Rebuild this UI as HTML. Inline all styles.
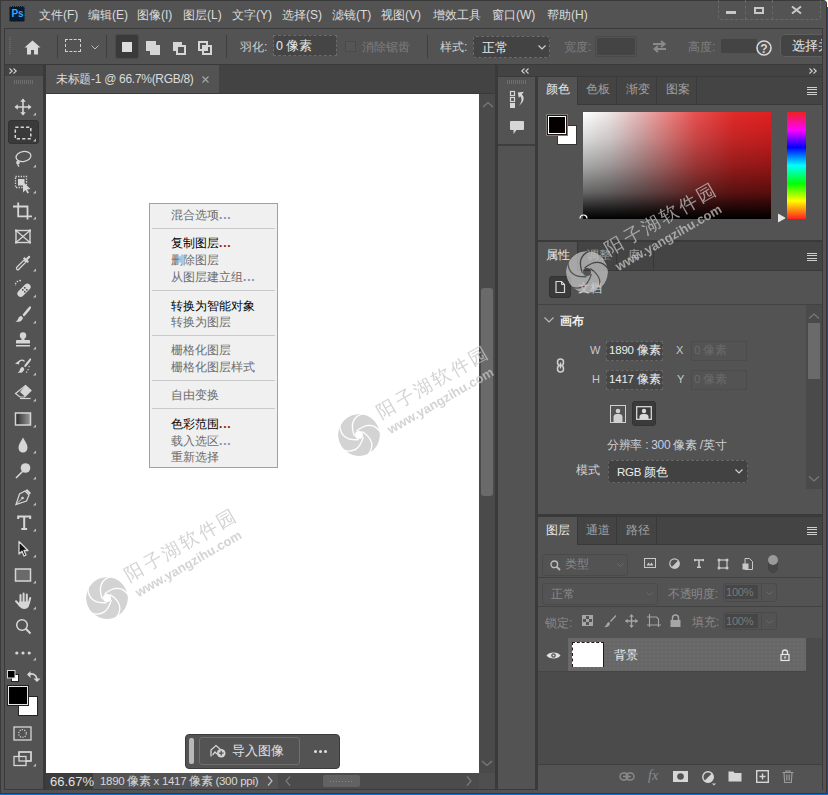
<!DOCTYPE html>
<html><head><meta charset="utf-8">
<style>
*{margin:0;padding:0;box-sizing:border-box}
html,body{width:828px;height:795px;overflow:hidden;background:#fff}
body{position:relative;font-family:"Liberation Sans",sans-serif;font-size:12px;color:#e0e0e0}
.a{position:absolute}
.t{position:absolute;white-space:nowrap;line-height:1}
svg{position:absolute;overflow:visible}
</style></head><body>
<!-- window frame -->
<div class="a" style="left:0;top:0;width:827px;height:794px;background:#535353;border-top-right-radius:4px;border-top:1px solid #3a3a3a;border-right:1px solid #3d3630"></div>
<div class="a" style="left:827px;top:7px;width:1px;height:788px;background:#0050d0"></div>
<div class="a" style="left:0;top:0;width:1px;height:794px;background:#3a3a3a"></div>
<div class="a" style="left:0;top:793px;width:827px;height:1px;background:#3d3630"></div>
<div class="a" style="left:0;top:794px;width:828px;height:1px;background:#0a72d8"></div>
<div class="a" style="left:4px;top:789px;width:819px;height:1px;background:#3a3a3a"></div>
<!-- menu bar -->
<div class="a" style="left:9px;top:6px;width:16px;height:16px;background:#0b1a2b;border-radius:2px;border:1px dotted #2a5a90"></div>
<div class="t" style="left:11.5px;top:9px;font-size:10px;font-weight:bold;color:#31a8ff;letter-spacing:-0.2px">Ps</div>
<div class="t" style="left:39px;top:9px;color:#dcdcdc">文件(F)</div>
<div class="t" style="left:88px;top:9px;color:#dcdcdc">编辑(E)</div>
<div class="t" style="left:137px;top:9px;color:#dcdcdc">图像(I)</div>
<div class="t" style="left:183px;top:9px;color:#dcdcdc">图层(L)</div>
<div class="t" style="left:232px;top:9px;color:#dcdcdc">文字(Y)</div>
<div class="t" style="left:282px;top:9px;color:#dcdcdc">选择(S)</div>
<div class="t" style="left:332px;top:9px;color:#dcdcdc">滤镜(T)</div>
<div class="t" style="left:381px;top:9px;color:#dcdcdc">视图(V)</div>
<div class="t" style="left:433px;top:9px;color:#dcdcdc">增效工具</div>
<div class="t" style="left:492px;top:9px;color:#dcdcdc">窗口(W)</div>
<div class="t" style="left:547px;top:9px;color:#dcdcdc">帮助(H)</div>
<!-- window controls -->
<div class="a" style="left:718px;top:-2px;width:103px;height:22px;border:1px dashed #6a6a6a;border-radius:0 0 4px 4px"></div>
<div class="a" style="left:745px;top:0;width:1px;height:20px;border-left:1px dashed #6a6a6a"></div>
<div class="a" style="left:772px;top:0;width:1px;height:20px;border-left:1px dashed #6a6a6a"></div>
<div class="a" style="left:726px;top:11px;width:10px;height:3px;background:#c8c8c8"></div>
<div class="a" style="left:754px;top:7px;width:10px;height:7px;border:2px solid #c8c8c8"></div>
<svg style="left:791px;top:6px" width="11" height="8" viewBox="0 0 11 8"><path d="M1 0.5L10 7.5M10 0.5L1 7.5" stroke="#c8c8c8" stroke-width="2"/></svg>

<!-- options toolbar -->
<div class="a" style="left:4px;top:28px;width:819px;height:36px;background:#535353;border:1px solid #3a3a3a;border-bottom:none"></div>


<!-- options content -->
<div class="a" style="left:9px;top:37px;width:2px;height:18px;background:repeating-linear-gradient(#666 0 1px,transparent 1px 2px)"></div>
<svg style="left:24px;top:40px" width="17" height="15" viewBox="0 0 17 15"><path d="M8.5 0.5L0.5 7.5H3V14.5H7V10H10V14.5H14V7.5H16.5Z" fill="#d8d8d8"/></svg>
<div class="a" style="left:57px;top:35px;width:1px;height:23px;background:#3e3e3e"></div>
<div class="a" style="left:65px;top:39px;width:16px;height:13px;border:1.5px dashed #d0d0d0"></div>
<svg style="left:91px;top:45px" width="8" height="5" viewBox="0 0 8 5"><path d="M0.5 0.5L4 4L7.5 0.5" stroke="#bdbdbd" fill="none" stroke-width="1"/></svg>
<div class="a" style="left:106px;top:35px;width:1px;height:23px;background:#3e3e3e"></div>
<div class="a" style="left:115px;top:34px;width:24px;height:25px;background:#3a3a3a;border:1px solid #4a4a4a;border-radius:3px"></div>
<div class="a" style="left:122px;top:42px;width:10px;height:10px;background:#dcdcdc"></div>
<div class="a" style="left:146px;top:41px;width:10px;height:10px;background:#d6d6d6"></div>
<div class="a" style="left:150px;top:45px;width:10px;height:10px;background:#d6d6d6"></div>
<div class="a" style="left:173px;top:42px;width:9px;height:9px;background:#d6d6d6"></div>
<div class="a" style="left:176px;top:45px;width:10px;height:10px;border:2px solid #d6d6d6;background:#535353"></div>
<div class="a" style="left:198px;top:41px;width:10px;height:10px;border:2px solid #d6d6d6"></div>
<div class="a" style="left:202px;top:45px;width:10px;height:10px;border:2px solid #d6d6d6"></div><div class="a" style="left:202px;top:45px;width:6px;height:6px;background:#d6d6d6"></div>
<div class="a" style="left:226px;top:35px;width:1px;height:23px;background:#3e3e3e"></div>
<div class="t" style="left:240px;top:41px;color:#d0d0d0">羽化:</div>
<div class="a" style="left:273px;top:35px;width:64px;height:21px;background:#454545;border:1px dashed #6a6a6a"></div>
<div class="t" style="left:276px;top:40px;color:#e8e8e8;font-size:12.5px">0 像素</div>
<div class="a" style="left:345px;top:41px;width:11px;height:11px;border:1px solid #4a4a4a;background:#565656"></div>
<div class="t" style="left:362px;top:41px;color:#7e7e7e">消除锯齿</div>
<div class="a" style="left:427px;top:35px;width:1px;height:23px;background:#3e3e3e"></div>
<div class="t" style="left:440px;top:41px;color:#d0d0d0">样式:</div>
<div class="a" style="left:473px;top:36px;width:77px;height:22px;background:#434343;border:1px dashed #6a6a6a;border-radius:3px"></div>
<div class="t" style="left:482px;top:42px;color:#e8e8e8;font-size:12.5px">正常</div>
<svg style="left:538px;top:45px" width="8" height="5" viewBox="0 0 8 5"><path d="M0.5 0.5L4 4L7.5 0.5" stroke="#d0d0d0" fill="none" stroke-width="1.2"/></svg>
<div class="t" style="left:564px;top:41px;color:#7e7e7e">宽度:</div>
<div class="a" style="left:595px;top:36px;width:42px;height:21px;border:1px solid #4a4a4a;background:#535353"></div>
<div class="a" style="left:597px;top:38px;width:38px;height:17px;background:#444"></div>
<svg style="left:652px;top:40px" width="15" height="13" viewBox="0 0 15 13"><path d="M1 4H12M9 1L12.5 4L9 7M14 9H3M6 6L2.5 9L6 12" stroke="#8a8a8a" fill="none" stroke-width="2"/></svg>
<div class="t" style="left:688px;top:41px;color:#7e7e7e">高度:</div>
<div class="a" style="left:721px;top:39px;width:36px;height:14px;background:#444"></div>
<svg style="left:756px;top:40px" width="16" height="16" viewBox="0 0 16 16"><circle cx="8" cy="8" r="7" stroke="#d8d8d8" stroke-width="1.6" fill="none"/><text x="8" y="12.5" text-anchor="middle" font-size="12" font-weight="bold" fill="#d8d8d8" font-family="Liberation Sans">?</text></svg>
<div class="a" style="left:780px;top:34px;width:42px;height:23px;overflow:hidden"><div class="a" style="left:0;top:0;width:50px;height:23px;background:#444;border:1px solid #5e5e5e;border-radius:4px"></div>
<div class="t" style="left:12px;top:5px;color:#e8e8e8;font-size:13px">选择并</div></div>

<!-- left ">>" strip -->
<div class="a" style="left:4px;top:64px;width:819px;height:1px;background:#3a3a3a"></div>
<div class="a" style="left:5px;top:65px;width:38px;height:11px;background:#434343"></div>
<!-- left tool column -->
<div class="a" style="left:4px;top:64px;width:1px;height:726px;background:#3a3a3a"></div>
<div class="a" style="left:5px;top:76px;width:38px;height:713px;background:#535353"></div>
<div class="a" style="left:43px;top:64px;width:3px;height:726px;background:#3a3a3a"></div>

<!-- tools -->
<div class="a" style="left:14px;top:80px;width:20px;height:4px;background:repeating-linear-gradient(90deg,#6e6e6e 0 1px,transparent 1px 2px)"></div>
<svg style="left:9px;top:68px" width="8" height="6" viewBox="0 0 8 6"><path d="M0.5 0.5L3.2 3L0.5 5.5M4.5 0.5L7.2 3L4.5 5.5" stroke="#d0d0d0" fill="none" stroke-width="1.1"/></svg>
<div class="a" style="left:8px;top:120px;width:31px;height:24px;background:#3a3a3a;border:1px solid #333;border-radius:3px"></div>
<svg style="left:13px;top:96.5px" width="20" height="20" viewBox="0 0 20 20"><path d="M10 2.5V17.5M2.5 10H17.5" stroke="#d6d6d6" stroke-width="1.6"/><path d="M10 1.5L12.8 4.8H7.2ZM10 18.5L12.8 15.2H7.2ZM1.5 10L4.8 7.2V12.8ZM18.5 10L15.2 7.2V12.8Z" fill="#d6d6d6"/><path d="M23 15.5V18.5H20Z" fill="#bdbdbd"/></svg>
<svg style="left:13px;top:122.5px" width="20" height="20" viewBox="0 0 20 20"><rect x="2.3" y="4.3" width="15.5" height="11.5" fill="none" stroke="#d6d6d6" stroke-width="1.5" stroke-dasharray="3.2 2.2"/><path d="M23 15.5V18.5H20Z" fill="#bdbdbd"/></svg>
<svg style="left:13px;top:148.5px" width="20" height="20" viewBox="0 0 20 20"><ellipse cx="10.5" cy="7.5" rx="7.5" ry="5" fill="none" stroke="#d6d6d6" stroke-width="1.3" transform="rotate(-10 10.5 7.5)"/><path d="M5 12C3 13 3.5 15 5.5 14.5C7 14 6 12.5 5 12.5C4 13 4.5 16 6 17.5" fill="none" stroke="#d6d6d6" stroke-width="1.3"/><path d="M23 15.5V18.5H20Z" fill="#bdbdbd"/></svg>
<svg style="left:13px;top:174.5px" width="20" height="20" viewBox="0 0 20 20"><rect x="2.5" y="1.5" width="11" height="11" fill="none" stroke="#d6d6d6" stroke-width="1.3" stroke-dasharray="1.3 1.3"/><rect x="5" y="4" width="6.5" height="6.5" fill="#d6d6d6"/><path d="M10 7L10 17.5L12.5 15L14.5 18.5L16 17.5L14 14.5L17.5 14Z" fill="#d6d6d6"/><path d="M23 15.5V18.5H20Z" fill="#bdbdbd"/></svg>
<svg style="left:13px;top:200.5px" width="20" height="20" viewBox="0 0 20 20"><path d="M0 5.5H5.2M5.2 1.5V15.3H19M5.2 5.5H14.5V18.5" fill="none" stroke="#d6d6d6" stroke-width="1.8"/><path d="M23 15.5V18.5H20Z" fill="#bdbdbd"/></svg>
<svg style="left:13px;top:226.5px" width="20" height="20" viewBox="0 0 20 20"><rect x="3" y="3.5" width="14" height="12" fill="none" stroke="#d6d6d6" stroke-width="1.4"/><path d="M3 3.5L17 15.5M17 3.5L3 15.5" stroke="#d6d6d6" stroke-width="1.3"/><g fill="#d6d6d6"><rect x="2" y="2.5" width="2" height="2"/><rect x="16" y="2.5" width="2" height="2"/><rect x="2" y="14.5" width="2" height="2"/><rect x="16" y="14.5" width="2" height="2"/></g></svg>
<svg style="left:13px;top:252.5px" width="20" height="20" viewBox="0 0 20 20"><path d="M4 16.5C3 15.5 3.5 14.5 4.5 13.5L11 7L13 9L6.5 15.5C5.5 16.5 5 17.5 4 16.5Z" fill="none" stroke="#d6d6d6" stroke-width="1.2"/><path d="M10 5.5L14.5 10L16 8.5L14.5 7L17 4.5C17.8 3.5 16.5 2 15.5 3L13 5.5L11.5 4Z" fill="#d6d6d6"/><path d="M23 15.5V18.5H20Z" fill="#bdbdbd"/></svg>
<svg style="left:13px;top:278.5px" width="20" height="20" viewBox="0 0 20 20"><path d="M8 1.5C4 1.5 2 4 2.5 7" fill="none" stroke="#d6d6d6" stroke-width="1.3" stroke-dasharray="1.6 1.3"/><rect x="3" y="8" width="16" height="6.5" rx="3.25" transform="rotate(-45 11 11.25)" fill="#d6d6d6"/><g fill="#535353"><rect x="9" y="10" width="1.6" height="1.6"/><rect x="11" y="8" width="1.6" height="1.6"/><rect x="11" y="12" width="1.6" height="1.6"/><rect x="13" y="10" width="1.6" height="1.6"/></g><path d="M23 15.5V18.5H20Z" fill="#bdbdbd"/></svg>
<svg style="left:13px;top:304.5px" width="20" height="20" viewBox="0 0 20 20"><path d="M16.5 1.5C15 3 11.5 7 9.5 10L11 11.5C13.5 9 17 5 18 3C18.3 2 17.5 1 16.5 1.5Z" fill="#d6d6d6"/><path d="M8.5 11C6.5 11 5.5 12.5 5 14C4.6 15 4 16 2.5 16.5C5.5 17.5 9 16.5 10 13Z" fill="#d6d6d6"/><path d="M23 15.5V18.5H20Z" fill="#bdbdbd"/></svg>
<svg style="left:13px;top:330.5px" width="20" height="20" viewBox="0 0 20 20"><circle cx="10" cy="4.5" r="3.2" fill="#d6d6d6"/><path d="M8.5 6.5H11.5V9H16C16.5 9 17 9.5 17 10V12.5H3V10C3 9.5 3.5 9 4 9H8.5Z" fill="#d6d6d6"/><rect x="3" y="14" width="14" height="1.5" fill="#d6d6d6"/><path d="M23 15.5V18.5H20Z" fill="#bdbdbd"/></svg>
<svg style="left:13px;top:356.5px" width="20" height="20" viewBox="0 0 20 20"><path d="M17 1.5C15.5 3 12.5 6.5 11 9L12.2 10.2C14 8.5 17 5 18 3C18.3 2 17.8 1 17 1.5Z" fill="#d6d6d6"/><path d="M10 10C8 10 7 11.5 6.8 13C6.5 14 6 15 4.5 15.5C7.5 16.5 10.5 15.5 11.3 12Z" fill="#d6d6d6"/><path d="M5.5 5C7.5 3 10 3 11.5 4.5" fill="none" stroke="#d6d6d6" stroke-width="1.2"/><path d="M2 6.5L6.5 3.5L6 7.5Z" fill="#d6d6d6"/><g fill="#d6d6d6"><rect x="15.5" y="9" width="1.2" height="1.2"/><rect x="14.5" y="12" width="1.2" height="1.2"/><rect x="13" y="14.5" width="1.2" height="1.2"/></g><path d="M23 15.5V18.5H20Z" fill="#bdbdbd"/></svg>
<svg style="left:13px;top:382.5px" width="20" height="20" viewBox="0 0 20 20"><path d="M12.5 2.5L18 7.5L11.5 14H7L2.5 10.5Z" fill="none" stroke="#d6d6d6" stroke-width="1.2"/><path d="M12.5 2.5L18 7.5L12 13.5L7 9Z" fill="#d6d6d6"/><path d="M7 15.5H17.5" stroke="#d6d6d6" stroke-width="1.2"/><path d="M23 15.5V18.5H20Z" fill="#bdbdbd"/></svg>
<svg style="left:13px;top:408.5px" width="20" height="20" viewBox="0 0 20 20"><defs><linearGradient id="gr" x1="0" x2="1"><stop offset="0" stop-color="#2a2a2a"/><stop offset="1" stop-color="#9a9a9a"/></linearGradient></defs><rect x="2.5" y="4" width="15" height="12" fill="url(#gr)" stroke="#d6d6d6" stroke-width="1.5"/><path d="M23 15.5V18.5H20Z" fill="#bdbdbd"/></svg>
<svg style="left:13px;top:434.5px" width="20" height="20" viewBox="0 0 20 20"><path d="M10 2.5C8 6.5 5.5 9 5.5 12.5C5.5 15.5 7.5 17.5 10 17.5C12.5 17.5 14.5 15.5 14.5 12.5C14.5 9 12 6.5 10 2.5Z" fill="#d6d6d6"/><path d="M23 15.5V18.5H20Z" fill="#bdbdbd"/></svg>
<svg style="left:13px;top:460.5px" width="20" height="20" viewBox="0 0 20 20"><circle cx="12.5" cy="7" r="4.8" fill="#d6d6d6"/><path d="M9.5 10.5L3 17" stroke="#d6d6d6" stroke-width="1.6"/><path d="M23 15.5V18.5H20Z" fill="#bdbdbd"/></svg>
<svg style="left:13px;top:486.5px" width="20" height="20" viewBox="0 0 20 20"><path d="M14 2L18 6L16.5 7.5L12.5 3.5Z" fill="#d6d6d6"/><path d="M12 4L16 8L13.5 14L3 17.5L6.5 7Z" fill="none" stroke="#d6d6d6" stroke-width="1.2"/><path d="M3 17.5L9 11.5" stroke="#d6d6d6" stroke-width="1"/><circle cx="9.5" cy="11" r="1.3" fill="#d6d6d6"/><path d="M23 15.5V18.5H20Z" fill="#bdbdbd"/></svg>
<svg style="left:13px;top:512.5px" width="20" height="20" viewBox="0 0 20 20"><path d="M5.2 2.5V6M17.2 2.5V6M5.2 3.5H17.2M11.2 3.5V16M8.3 16H14.1" fill="none" stroke="#d6d6d6" stroke-width="2"/><path d="M23 15.5V18.5H20Z" fill="#bdbdbd"/></svg>
<svg style="left:13px;top:538.5px" width="20" height="20" viewBox="0 0 20 20"><path d="M6 2.5V15L9 12.3L11 17L13 16L11 11.5H15Z" fill="#111" stroke="#d6d6d6" stroke-width="1.3" stroke-linejoin="round"/><path d="M23 15.5V18.5H20Z" fill="#bdbdbd"/></svg>
<svg style="left:13px;top:564.5px" width="20" height="20" viewBox="0 0 20 20"><rect x="2.5" y="4" width="15" height="12" fill="#6a6a6a" stroke="#d6d6d6" stroke-width="1.5"/><path d="M23 15.5V18.5H20Z" fill="#bdbdbd"/></svg>
<svg style="left:13px;top:590.5px" width="20" height="20" viewBox="0 0 20 20"><path d="M7.5 4V11M10.6 2.6V11M13.8 3.5V11M17.2 7L15.8 12.5M3 10.2L6.8 14.5" stroke="#d6d6d6" stroke-width="2" stroke-linecap="round"/><path d="M6.3 10.5H16.6L16 15C15.2 17 13.4 17.9 11.2 17.9C9 17.9 7.6 17 6.6 15.4L5.3 13Z" fill="#d6d6d6"/><path d="M23 15.5V18.5H20Z" fill="#bdbdbd"/></svg>
<svg style="left:13px;top:616.5px" width="20" height="20" viewBox="0 0 20 20"><circle cx="9" cy="8" r="5.3" fill="none" stroke="#d6d6d6" stroke-width="1.5"/><path d="M12.8 11.8L17.5 16.5" stroke="#d6d6d6" stroke-width="2"/></svg>
<svg style="left:13px;top:642.5px" width="20" height="20" viewBox="0 0 20 20"><circle cx="3.8" cy="10" r="1.6" fill="#d6d6d6"/><circle cx="10" cy="10" r="1.6" fill="#d6d6d6"/><circle cx="16.2" cy="10" r="1.6" fill="#d6d6d6"/><path d="M23 14.5V17.5H20Z" fill="#bdbdbd"/></svg>
<div class="a" style="left:18px;top:696px;width:20px;height:20px;background:#fff;border:1px solid #222"></div>
<div class="a" style="left:8px;top:686px;width:20px;height:19px;background:#000;border:1.5px solid #e8e8e8;outline:1px solid #222"></div>
<svg style="left:7px;top:670px" width="12" height="12" viewBox="0 0 12 12"><rect x="4.5" y="4.5" width="7" height="7" fill="#fff" stroke="#222"/><rect x="0.5" y="0.5" width="7.5" height="7.5" fill="#000" stroke="#d6d6d6"/></svg>
<svg style="left:27px;top:670px" width="12" height="12" viewBox="0 0 12 12"><path d="M1.5 4.5C5 3 9 4 10 9" fill="none" stroke="#d6d6d6" stroke-width="1.6"/><path d="M0 4.5L3.5 1V8ZM10 12L6.5 8.5H13.5Z" fill="#d6d6d6"/></svg>
<svg style="left:13px;top:726px" width="19" height="15" viewBox="0 0 19 15"><rect x="1" y="1" width="17" height="13" fill="none" stroke="#d6d6d6" stroke-width="1.3"/><circle cx="9.5" cy="7.5" r="3.8" fill="none" stroke="#d6d6d6" stroke-width="1.2" stroke-dasharray="1.2 1.2"/></svg>
<svg style="left:13px;top:751px" width="24" height="18" viewBox="0 0 24 18"><rect x="6" y="1" width="12" height="9" fill="#535353" stroke="#d6d6d6" stroke-width="1.3"/><rect x="1" y="5.5" width="12" height="9" fill="#535353" stroke="#d6d6d6" stroke-width="1.3"/><rect x="6" y="1" width="12" height="9" fill="none" stroke="#d6d6d6" stroke-width="1.3"/><path d="M23 12.5V15.5H20Z" fill="#bdbdbd"/></svg>

<!-- doc tab bar -->
<div class="a" style="left:46px;top:65px;width:449px;height:29px;background:#434343"></div>
<div class="a" style="left:46px;top:65px;width:173px;height:28px;background:#535353"></div>
<div class="a" style="left:46px;top:93px;width:449px;height:1px;background:#3a3a3a"></div>
<!-- canvas -->
<div class="a" style="left:46px;top:94px;width:433px;height:679px;background:#fff"></div>

<!-- doc tab text -->
<div class="t" style="left:56px;top:73px;color:#dcdcdc;font-size:12px;letter-spacing:-0.3px">未标题-1 @ 66.7%(RGB/8)</div>
<svg style="left:202px;top:76px" width="7" height="7" viewBox="0 0 7 7"><path d="M0.5 0.5L6.5 6.5M6.5 0.5L0.5 6.5" stroke="#a8a8a8" stroke-width="1.1"/></svg>


<!-- float bar -->
<div class="a" style="left:185px;top:734px;width:155px;height:35px;background:#535353;border:1px solid #3c3c3c;border-radius:4px"></div>
<div class="a" style="left:189px;top:738px;width:5px;height:26px;background:#b8b8b8;border-radius:2px"></div>
<div class="a" style="left:199px;top:737px;width:101px;height:28px;border:1px solid #6e6e6e;border-radius:3px"></div>
<svg style="left:210px;top:744px" width="16" height="14" viewBox="0 0 16 14"><path d="M1 12.5V6L6 1.5L11 6" fill="none" stroke="#d6d6d6" stroke-width="1.3"/><path d="M2.5 11L5 8L7 10" fill="none" stroke="#d6d6d6" stroke-width="1.2"/><circle cx="11.2" cy="9.2" r="4.3" fill="#d6d6d6"/><path d="M11.2 6.8V11.6M8.8 9.2H13.6" stroke="#535353" stroke-width="1.3"/></svg>
<div class="t" style="left:232px;top:745px;color:#e0e0e0;font-size:12.5px">导入图像</div>
<div class="a" style="left:314px;top:750px;width:3px;height:3px;background:#e0e0e0;border-radius:50%"></div>
<div class="a" style="left:319px;top:750px;width:3px;height:3px;background:#e0e0e0;border-radius:50%"></div>
<div class="a" style="left:324px;top:750px;width:3px;height:3px;background:#e0e0e0;border-radius:50%"></div>
<!-- context menu -->
<div class="a" style="left:149px;top:203px;width:129px;height:265px;background:#f0f0f0;border:1px solid #a0a0a0"></div>
<div class="t" style="left:171px;top:209px;color:#6d6d6d;font-size:12px">混合选项<span style="color:#7a8fb8;font-weight:bold;letter-spacing:0.8px">...</span></div>
<div class="a" style="left:152px;top:228px;width:123px;height:1px;background:#c8c8c8"></div>
<div class="t" style="left:171px;top:237px;color:#000;font-size:12px">复制图层<span style="color:#8b1a1a;font-weight:bold;letter-spacing:0.8px">...</span></div>
<div class="t" style="left:171px;top:254px;color:#6d6d6d;font-size:12px">删除图层</div>
<div class="t" style="left:171px;top:271px;color:#6d6d6d;font-size:12px">从图层建立组<span style="color:#7a8fb8;font-weight:bold;letter-spacing:0.8px">...</span></div>
<div class="a" style="left:152px;top:290px;width:123px;height:1px;background:#c8c8c8"></div>
<div class="t" style="left:171px;top:300px;color:#000;font-size:12px">转换为智能对象</div>
<div class="t" style="left:171px;top:316px;color:#6d6d6d;font-size:12px">转换为图层</div>
<div class="a" style="left:152px;top:335px;width:123px;height:1px;background:#c8c8c8"></div>
<div class="t" style="left:171px;top:344px;color:#6d6d6d;font-size:12px">栅格化图层</div>
<div class="t" style="left:171px;top:361px;color:#6d6d6d;font-size:12px">栅格化图层样式</div>
<div class="a" style="left:152px;top:380px;width:123px;height:1px;background:#c8c8c8"></div>
<div class="t" style="left:171px;top:389px;color:#6d6d6d;font-size:12px">自由变换</div>
<div class="a" style="left:152px;top:408px;width:123px;height:1px;background:#c8c8c8"></div>
<div class="t" style="left:171px;top:418px;color:#000;font-size:12px">色彩范围<span style="color:#8b1a1a;font-weight:bold;letter-spacing:0.8px">...</span></div>
<div class="t" style="left:171px;top:435px;color:#6d6d6d;font-size:12px">载入选区<span style="color:#7a8fb8;font-weight:bold;letter-spacing:0.8px">...</span></div>
<div class="t" style="left:171px;top:451px;color:#6d6d6d;font-size:12px">重新选择</div>
<!-- v scrollbar -->
<div class="a" style="left:479px;top:94px;width:16px;height:679px;background:#4a4a4a"></div>
<div class="a" style="left:481px;top:288px;width:12px;height:208px;background:#6a6a6a;border-radius:3px"></div>
<!-- status bar -->
<div class="a" style="left:46px;top:773px;width:449px;height:16px;background:#535353"></div>
<div class="a" style="left:46px;top:773px;width:47px;height:16px;background:#3d3d3d"></div>
<div class="a" style="left:278px;top:773px;width:201px;height:16px;background:#4b4b4b"></div>
<div class="a" style="left:479px;top:773px;width:16px;height:16px;background:#4f4f4f"></div>
<div class="a" style="left:323px;top:775px;width:37px;height:12px;background:#626262;border-radius:2px"></div>

<svg style="left:482px;top:101px" width="12" height="7" viewBox="0 0 12 7"><path d="M1 6L6 1.5L11 6" stroke="#7a7a7a" fill="none" stroke-width="1.3"/></svg>
<svg style="left:481px;top:760px" width="12" height="7" viewBox="0 0 12 7"><path d="M1 1L6 5.5L11 1" stroke="#7a7a7a" fill="none" stroke-width="1.3"/></svg>
<!-- status -->
<div class="t" style="left:50px;top:775px;color:#e0e0e0;font-size:13px">66.67%</div>
<div class="t" style="left:100px;top:776px;color:#d8d8d8;font-size:11.5px;letter-spacing:-0.3px">1890 像素 x 1417 像素 (300 ppi)</div>
<svg style="left:267px;top:776px" width="6" height="10" viewBox="0 0 6 10"><path d="M1 0.5L5 5L1 9.5" stroke="#bdbdbd" fill="none" stroke-width="1.2"/></svg>
<svg style="left:285px;top:776px" width="6" height="10" viewBox="0 0 6 10"><path d="M5 0.5L1 5L5 9.5" stroke="#7a7a7a" fill="none" stroke-width="1.2"/></svg>
<svg style="left:466px;top:776px" width="6" height="10" viewBox="0 0 6 10"><path d="M1 0.5L5 5L1 9.5" stroke="#7a7a7a" fill="none" stroke-width="1.2"/></svg>
<div class="a" style="left:330px;top:781px;width:23px;height:1px;background:repeating-linear-gradient(90deg,#8a8a8a 0 1px,transparent 1px 3px)"></div>
<div class="a" style="left:495px;top:64px;width:3px;height:726px;background:#3a3a3a"></div>

<!-- panel column narrow -->
<div class="a" style="left:498px;top:65px;width:324px;height:11px;background:#434343"></div>
<div class="a" style="left:498px;top:76px;width:324px;height:1px;background:#3a3a3a"></div>
<div class="a" style="left:498px;top:77px;width:37px;height:712px;background:#535353"></div>
<div class="a" style="left:498px;top:144px;width:37px;height:2px;background:#3e3e3e"></div>
<div class="a" style="left:535px;top:76px;width:3px;height:714px;background:#3a3a3a"></div>
<div class="a" style="left:822px;top:64px;width:1px;height:726px;background:#3a3a3a"></div>

<!-- color panel -->
<div class="a" style="left:538px;top:77px;width:284px;height:163px;background:#535353"></div>
<div class="a" style="left:577px;top:77px;width:245px;height:28px;background:#444444;border-bottom:1px solid #3a3a3a"></div>
<div class="a" style="left:538px;top:240px;width:284px;height:2px;background:#3a3a3a"></div>

<!-- narrow panel content -->
<svg style="left:521px;top:68px" width="8" height="6" viewBox="0 0 8 6"><path d="M3.5 0.5L0.8 3L3.5 5.5M7.5 0.5L4.8 3L7.5 5.5" stroke="#d0d0d0" fill="none" stroke-width="1.1"/></svg>
<svg style="left:809px;top:68px" width="8" height="6" viewBox="0 0 8 6"><path d="M0.5 0.5L3.2 3L0.5 5.5M4.5 0.5L7.2 3L4.5 5.5" stroke="#d0d0d0" fill="none" stroke-width="1.1"/></svg>
<div class="a" style="left:507px;top:80px;width:20px;height:4px;background:repeating-linear-gradient(90deg,#6e6e6e 0 1px,transparent 1px 2px)"></div>
<svg style="left:509px;top:90px" width="17" height="19" viewBox="0 0 17 19"><rect x="1.5" y="1.5" width="4" height="4" fill="none" stroke="#d6d6d6" stroke-width="1.2"/><rect x="1.5" y="7.5" width="4" height="4" fill="none" stroke="#d6d6d6" stroke-width="1.2"/><rect x="1" y="13" width="5" height="5" fill="#d6d6d6"/><path d="M8.8 2.6L14.8 1.8L12.8 4.6C15.8 7 15.5 12 9.8 16C13 12 13.2 8.5 11.3 6.3L9.8 8Z" fill="#d6d6d6"/></svg>
<svg style="left:509px;top:120px" width="16" height="15" viewBox="0 0 16 15"><path d="M2 1H14Q15 1 15 2V9Q15 10 14 10H7.5L4.5 14V10H2Q1 10 1 9V2Q1 1 2 1Z" fill="#d6d6d6"/></svg>

<!-- color panel content -->
<div class="t" style="left:546px;top:84px;color:#e8e8e8;font-size:11.5px">颜色</div>
<div class="t" style="left:586px;top:84px;color:#a0a0a0;font-size:11.5px">色板</div>
<div class="t" style="left:626px;top:84px;color:#a0a0a0;font-size:11.5px">渐变</div>
<div class="t" style="left:666px;top:84px;color:#a0a0a0;font-size:11.5px">图案</div>
<div class="a" style="left:616px;top:77px;width:1px;height:28px;background:#3a3a3a"></div>
<div class="a" style="left:656px;top:77px;width:1px;height:28px;background:#3a3a3a"></div>
<div class="a" style="left:696px;top:77px;width:1px;height:28px;background:#3a3a3a"></div>
<div class="a" style="left:577px;top:77px;width:1px;height:28px;background:#3a3a3a"></div>
<div class="a" style="left:807px;top:87px;width:10px;height:8px;background:repeating-linear-gradient(#cfcfcf 0 1px,transparent 1px 2.4px)"></div>
<div class="a" style="left:557px;top:125px;width:20px;height:20px;background:#fff;border:1px solid #333"></div>
<div class="a" style="left:546px;top:114px;width:22px;height:22px;background:#050000;border:1px solid #7c7c7c;box-shadow:inset 0 0 0 1px #2a1414,inset 0 0 0 2px #fff"></div>
<div class="a" style="left:583px;top:112px;width:188px;height:107px;background:linear-gradient(to bottom,rgba(0,0,0,0) 0%,rgba(0,0,0,.14) 25%,rgba(0,0,0,.34) 50%,rgba(0,0,0,.6) 75%,rgba(0,0,0,.86) 90%,#000 100%),linear-gradient(to right,#fff 0%,#eee6e6 14%,#e4b4b4 30%,#ea8282 45%,#e85050 60%,#e22a2a 80%,#e02020 100%)"></div>
<svg style="left:579px;top:211px" width="9" height="9" viewBox="0 0 9 9"><path d="M1 7.5A3.5 3.5 0 0 1 8 7.5" fill="none" stroke="#fff" stroke-width="1.2"/></svg>
<div class="a" style="left:787px;top:112px;width:19px;height:107px;background:linear-gradient(#f02020 0%,#ff00ff 17%,#0000ff 33%,#00ffff 50%,#00ff00 67%,#ffff00 83%,#ff2020 100%)"></div>
<svg style="left:777px;top:213px" width="9" height="10" viewBox="0 0 9 10"><path d="M1 1.5Q1 0.5 2 1L8 4.5Q8.7 5 8 5.5L2 9Q1 9.5 1 8.5Z" fill="#e6e6e6"/></svg>

<!-- properties panel -->
<div class="a" style="left:538px;top:242px;width:284px;height:272px;background:#535353"></div>
<div class="a" style="left:577px;top:242px;width:245px;height:29px;background:#444444;border-bottom:1px solid #3a3a3a"></div>
<div class="a" style="left:538px;top:304px;width:284px;height:1px;background:#424242"></div>
<div class="a" style="left:538px;top:514px;width:284px;height:3px;background:#3a3a3a"></div>

<!-- properties content -->
<div class="a" style="left:577px;top:242px;width:1px;height:28px;background:#383838"></div>
<div class="a" style="left:616px;top:242px;width:1px;height:28px;background:#383838"></div>
<div class="a" style="left:653px;top:242px;width:1px;height:28px;background:#383838"></div>
<div class="t" style="left:546px;top:250px;color:#e8e8e8;font-size:11.5px">属性</div>
<div class="t" style="left:587px;top:250px;color:#a0a0a0;font-size:11.5px">调整</div>
<div class="t" style="left:628px;top:250px;color:#a0a0a0;font-size:11.5px">库</div>
<div class="a" style="left:807px;top:253px;width:10px;height:8px;background:repeating-linear-gradient(#cfcfcf 0 1px,transparent 1px 2.4px)"></div>
<div class="a" style="left:549px;top:276px;width:22px;height:22px;background:#3a3a3a;border:1px solid #333;border-radius:3px"></div>
<svg style="left:553px;top:280px" width="14" height="14" viewBox="0 0 14 14"><path d="M3 1.5H8.5L11.5 4.5V12.5H3Z" fill="none" stroke="#d8d8d8" stroke-width="1.2"/><path d="M8.5 1.5V4.5H11.5" fill="none" stroke="#d8d8d8" stroke-width="1"/></svg>
<div class="t" style="left:578px;top:283px;color:#d8d8d8;font-size:11.5px">文档</div>
<svg style="left:544px;top:317px" width="10" height="6" viewBox="0 0 10 6"><path d="M0.5 0.5L5 5L9.5 0.5" stroke="#bdbdbd" fill="none" stroke-width="1.1"/></svg>
<div class="t" style="left:560px;top:316px;color:#f0f0f0;font-size:11.5px;font-weight:bold">画布</div>
<div class="t" style="left:590px;top:345px;color:#c8c8d8;font-size:11px">W</div>
<div class="a" style="left:606px;top:341px;width:57px;height:20px;background:#474747;border:1px dashed #666"></div>
<div class="t" style="left:609px;top:345px;color:#ececec;font-size:11.5px;letter-spacing:-0.2px">1890 像素</div>
<div class="t" style="left:676px;top:345px;color:#c8c8c8;font-size:11px">X</div>
<div class="a" style="left:691px;top:341px;width:56px;height:20px;border:1px solid #4c4c4c;background:#535353"></div>
<div class="t" style="left:694px;top:345px;color:#6a6a6a;font-size:11.5px;letter-spacing:-0.2px">0 像素</div>
<div class="t" style="left:592px;top:374px;color:#c8c8d8;font-size:11px">H</div>
<div class="a" style="left:606px;top:370px;width:57px;height:20px;background:#474747;border:1px dashed #666"></div>
<div class="t" style="left:609px;top:374px;color:#ececec;font-size:11.5px;letter-spacing:-0.2px">1417 像素</div>
<div class="t" style="left:677px;top:374px;color:#c8c8c8;font-size:11px">Y</div>
<div class="a" style="left:691px;top:370px;width:56px;height:20px;border:1px solid #4c4c4c;background:#535353"></div>
<div class="t" style="left:694px;top:374px;color:#6a6a6a;font-size:11.5px;letter-spacing:-0.2px">0 像素</div>
<svg style="left:556px;top:358px" width="10" height="15" viewBox="0 0 10 15"><rect x="1.5" y="1" width="6" height="6.5" rx="3" fill="none" stroke="#d0d0d0" stroke-width="1.5"/><rect x="1.5" y="7.5" width="6" height="6.5" rx="3" fill="none" stroke="#d0d0d0" stroke-width="1.5"/><path d="M4.5 4.5V10.5" stroke="#d0d0d0" stroke-width="1.3"/></svg>
<svg style="left:610px;top:405px" width="16" height="18" viewBox="0 0 16 18"><rect x="0.5" y="0.5" width="15" height="17" fill="none" stroke="#d0d0d0" stroke-width="1"/><circle cx="8" cy="6" r="2.3" fill="#d0d0d0"/><path d="M3.5 17V12C3.5 10 5 9 6.5 9H9.5C11 9 12.5 10 12.5 12V17Z" fill="#d0d0d0"/></svg>
<div class="a" style="left:632px;top:401px;width:24px;height:25px;background:#3a3a3a;border:1px solid #333;border-radius:3px"></div>
<svg style="left:636px;top:406px" width="16" height="14" viewBox="0 0 16 14"><rect x="0.7" y="0.7" width="14.6" height="12.6" fill="none" stroke="#d8d8d8" stroke-width="1.3"/><circle cx="8" cy="5" r="2.2" fill="#d8d8d8"/><path d="M3.5 13V10.5C3.5 9 5 8 6.5 8H9.5C11 8 12.5 9 12.5 10.5V13Z" fill="#d8d8d8"/></svg>
<div class="t" style="left:607px;top:439px;color:#d0d0d0;font-size:12px;letter-spacing:-0.3px">分辨率 : <span style="color:#c8cce0">300</span> 像素 /英寸</div>
<div class="t" style="left:576px;top:464px;color:#d0d0d0;font-size:12px">模式</div>
<div class="a" style="left:608px;top:460px;width:140px;height:23px;background:#424242;border:1px dashed #666;border-radius:3px"></div>
<div class="t" style="left:617px;top:467px;color:#ececec;font-size:11.5px;letter-spacing:-0.3px">RGB 颜色</div>
<svg style="left:735px;top:469px" width="8" height="5" viewBox="0 0 8 5"><path d="M0.5 0.5L4 4L7.5 0.5" stroke="#d0d0d0" fill="none" stroke-width="1.2"/></svg>
<div class="a" style="left:806px;top:305px;width:16px;height:184px;background:#4a4a4a"></div>
<div class="a" style="left:808px;top:323px;width:12px;height:56px;background:#6a6a6a"></div>
<svg style="left:808px;top:313px" width="12" height="6" viewBox="0 0 12 6"><path d="M1 5.5L6 1L11 5.5" stroke="#7a7a7a" fill="none" stroke-width="1.2"/></svg>
<svg style="left:808px;top:476px" width="12" height="6" viewBox="0 0 12 6"><path d="M1 0.5L6 5L11 0.5" stroke="#7a7a7a" fill="none" stroke-width="1.2"/></svg>

<!-- layers panel -->
<div class="a" style="left:538px;top:517px;width:284px;height:273px;background:#535353"></div>
<div class="a" style="left:577px;top:517px;width:245px;height:28px;background:#444444;border-bottom:1px solid #3a3a3a"></div>

<!-- layers content -->
<div class="a" style="left:577px;top:517px;width:1px;height:27px;background:#383838"></div>
<div class="a" style="left:616px;top:517px;width:1px;height:27px;background:#383838"></div>
<div class="a" style="left:656px;top:517px;width:1px;height:27px;background:#383838"></div>
<div class="t" style="left:546px;top:525px;color:#e8e8e8;font-size:11.5px">图层</div>
<div class="t" style="left:586px;top:525px;color:#a0a0a0;font-size:11.5px">通道</div>
<div class="t" style="left:626px;top:525px;color:#a0a0a0;font-size:11.5px">路径</div>
<div class="a" style="left:807px;top:527px;width:10px;height:8px;background:repeating-linear-gradient(#cfcfcf 0 1px,transparent 1px 2.4px)"></div>
<div class="a" style="left:542px;top:554px;width:86px;height:22px;border:1px solid #4a4a4a;border-radius:3px"></div>
<svg style="left:550px;top:560px" width="11" height="11" viewBox="0 0 11 11"><circle cx="4.3" cy="4.3" r="3.3" fill="none" stroke="#bdbdbd" stroke-width="1.4"/><path d="M6.8 6.8L10 10" stroke="#bdbdbd" stroke-width="1.8"/></svg>
<div class="t" style="left:565px;top:559px;color:#8a8a8a;font-size:11.5px">类型</div>
<svg style="left:617px;top:563px" width="7" height="4" viewBox="0 0 7 4"><path d="M0.5 0.5L3.5 3.5L6.5 0.5" stroke="#6a6a6a" fill="none" stroke-width="1"/></svg>
<svg style="left:644px;top:558px" width="12" height="10" viewBox="0 0 12 10"><rect x="0.5" y="0.5" width="11" height="9" fill="none" stroke="#c8c8c8" stroke-width="1"/><path d="M2.5 7.5L4.5 4.5L6 6.5L7.5 4.5L9.5 7.5Z" fill="#c8c8c8"/></svg>
<svg style="left:669px;top:558px" width="11" height="11" viewBox="0 0 11 11"><circle cx="5.5" cy="5.5" r="4.7" fill="none" stroke="#c8c8c8" stroke-width="1.2"/><path d="M9.2 2.5L2.5 9.2A4.7 4.7 0 0 0 9.2 2.5Z" fill="#c8c8c8"/></svg>
<svg style="left:694px;top:559px" width="10" height="9" viewBox="0 0 10 9"><path d="M0.8 0V2.2M9.2 0V2.2M0.8 1H9.2M5 1V8.3M3 8.3H7" fill="none" stroke="#c8c8c8" stroke-width="1.6"/></svg>
<svg style="left:717px;top:558px" width="12" height="12" viewBox="0 0 12 12"><rect x="2" y="2" width="8" height="8" fill="none" stroke="#c8c8c8" stroke-width="1.2"/><g fill="#c8c8c8"><circle cx="2" cy="2" r="1.5"/><circle cx="10" cy="2" r="1.5"/><circle cx="2" cy="10" r="1.5"/><circle cx="10" cy="10" r="1.5"/></g></svg>
<svg style="left:742px;top:558px" width="11" height="12" viewBox="0 0 11 12"><path d="M3 0.5H7.5L10.5 3.5V11.5H3Z" fill="none" stroke="#c8c8c8" stroke-width="1"/><rect x="0.5" y="5.5" width="6" height="6" fill="#c8c8c8"/></svg>
<div class="a" style="left:768px;top:555px;width:10px;height:18px;border-radius:5px;background:#474747;border:1px solid #444"></div>
<div class="a" style="left:768px;top:555px;width:10px;height:10px;border-radius:5px;background:#9a9a9a"></div>
<div class="a" style="left:538px;top:577px;width:284px;height:1px;background:#424242"></div>
<div class="a" style="left:542px;top:583px;width:116px;height:22px;border:1px solid #4a4a4a;border-radius:3px"></div>
<div class="t" style="left:551px;top:588px;color:#8a8a8a;font-size:12px">正常</div>
<svg style="left:646px;top:592px" width="7" height="4" viewBox="0 0 7 4"><path d="M0.5 0.5L3.5 3.5L6.5 0.5" stroke="#6a6a6a" fill="none" stroke-width="1"/></svg>
<div class="t" style="left:668px;top:588px;color:#8a8a8a;font-size:12px;letter-spacing:-0.3px">不透明度:</div>
<div class="a" style="left:723px;top:583px;width:54px;height:19px;border:1px solid #4a4a4a;border-radius:3px"></div>
<div class="a" style="left:725px;top:585px;width:33px;height:14px;background:#464646"></div>
<div class="a" style="left:761px;top:583px;width:1px;height:19px;background:#4a4a4a"></div>
<div class="t" style="left:726px;top:587px;color:#7a7a7a;font-size:11px;letter-spacing:-0.2px">100%</div>
<svg style="left:766px;top:591px" width="7" height="4" viewBox="0 0 7 4"><path d="M0.5 0.5L3.5 3.5L6.5 0.5" stroke="#6a6a6a" fill="none" stroke-width="1"/></svg>
<div class="a" style="left:538px;top:606px;width:284px;height:1px;background:#424242"></div>
<div class="t" style="left:545px;top:617px;color:#8a8a8a;font-size:12px">锁定:</div>
<svg style="left:582px;top:615px" width="11" height="11" viewBox="0 0 11 11"><rect x="0.5" y="0.5" width="10" height="10" fill="none" stroke="#a6a6a6" stroke-width="1"/><g fill="#a6a6a6"><rect x="1" y="1" width="3" height="3"/><rect x="7" y="1" width="3" height="3"/><rect x="4" y="4" width="3" height="3"/><rect x="1" y="7" width="3" height="3"/><rect x="7" y="7" width="3" height="3"/></g></svg>
<svg style="left:603px;top:614px" width="14" height="14" viewBox="0 0 14 14"><path d="M12.5 1L7 7L8 8L13.5 2Z" fill="#a6a6a6"/><path d="M6 8C4.5 8 4 9.5 3.5 10.5C3 11.5 2.5 12.5 1 13C3 13.5 6.5 13 7 9.5Z" fill="#a6a6a6"/></svg>
<svg style="left:625px;top:614px" width="13" height="14" viewBox="0 0 13 14"><path d="M6.5 1V13M0.5 7H12.5" stroke="#a6a6a6" stroke-width="1.3"/><path d="M6.5 0L8.8 2.7H4.2ZM6.5 14L8.8 11.3H4.2ZM0 7L2.7 4.7V9.3ZM13 7L10.3 4.7V9.3Z" fill="#a6a6a6"/></svg>
<svg style="left:647px;top:614px" width="14" height="14" viewBox="0 0 14 14"><path d="M2.5 0V13M0 11H14M0 3H9.5L11.5 5V13" fill="none" stroke="#a6a6a6" stroke-width="1.1"/></svg>
<svg style="left:670px;top:614px" width="11" height="13" viewBox="0 0 11 13"><path d="M2.5 6V4A3 3 0 0 1 8.5 4V6" fill="none" stroke="#a6a6a6" stroke-width="1.5"/><rect x="0.5" y="6" width="10" height="7" fill="#a6a6a6"/></svg>
<div class="t" style="left:692px;top:616px;color:#8a8a8a;font-size:12px">填充:</div>
<div class="a" style="left:723px;top:612px;width:54px;height:18px;border:1px solid #4a4a4a;border-radius:3px"></div>
<div class="a" style="left:725px;top:614px;width:33px;height:14px;background:#464646"></div>
<div class="a" style="left:761px;top:612px;width:1px;height:18px;background:#4a4a4a"></div>
<div class="t" style="left:726px;top:616px;color:#7a7a7a;font-size:11px;letter-spacing:-0.2px">100%</div>
<svg style="left:766px;top:620px" width="7" height="4" viewBox="0 0 7 4"><path d="M0.5 0.5L3.5 3.5L6.5 0.5" stroke="#6a6a6a" fill="none" stroke-width="1"/></svg>
<!-- layer list -->
<div class="a" style="left:538px;top:638px;width:284px;height:126px;background:#4b4b4b"></div>
<div class="a" style="left:538px;top:638px;width:268px;height:33px;background:#535353"></div>
<div class="a" style="left:568px;top:638px;width:238px;height:33px;background:#676767;background-image:radial-gradient(circle,#747474 0.6px,transparent 0.8px);background-size:4px 4px"></div>
<div class="a" style="left:538px;top:671px;width:268px;height:1px;background:#454545"></div>
<svg style="left:546px;top:651px" width="15" height="9" viewBox="0 0 15 9"><path d="M0.5 4.5C3 0.5 12 0.5 14.5 4.5C12 8.5 3 8.5 0.5 4.5Z" fill="#e0e0e0"/><circle cx="7.5" cy="4.5" r="2.3" fill="#535353"/><circle cx="7.5" cy="4.5" r="1" fill="#e0e0e0"/></svg>
<div class="a" style="left:572px;top:642px;width:32px;height:25px;background:#fff;border:1px dashed #2a1616;border-bottom:none;border-right-style:solid"></div>
<div class="t" style="left:614px;top:649px;color:#ececec;font-size:12px">背景</div>
<svg style="left:780px;top:649px" width="10" height="12" viewBox="0 0 10 12"><path d="M2.5 5.5V3.5A2.5 2.5 0 0 1 7.5 3.5V5.5" fill="none" stroke="#e6e6e6" stroke-width="1.3"/><rect x="1" y="5.5" width="8" height="6" fill="none" stroke="#e6e6e6" stroke-width="1.2"/><rect x="4.3" y="7.5" width="1.4" height="2" fill="#e6e6e6"/></svg>
<!-- footer -->
<div class="a" style="left:538px;top:764px;width:284px;height:1px;background:#3e3e3e"></div>
<div class="a" style="left:538px;top:765px;width:284px;height:24px;background:#535353"></div>
<svg style="left:619px;top:772px" width="16" height="9" viewBox="0 0 16 9"><rect x="1" y="1" width="8" height="7" rx="3.5" fill="none" stroke="#8a8a8a" stroke-width="1.5"/><rect x="7" y="1" width="8" height="7" rx="3.5" fill="none" stroke="#8a8a8a" stroke-width="1.5"/><path d="M4 4.5H12" stroke="#8a8a8a" stroke-width="1.5"/></svg>
<div class="t" style="left:648px;top:769px;color:#8a8a8a;font-size:14px;font-style:italic;font-family:'Liberation Serif',serif">fx</div>
<svg style="left:673px;top:771px" width="15" height="11" viewBox="0 0 15 11"><rect x="0" y="0" width="15" height="11" fill="#d6d6d6"/><circle cx="7.5" cy="5.5" r="3.3" fill="#535353"/></svg>
<svg style="left:702px;top:771px" width="14" height="15" viewBox="0 0 14 15"><circle cx="6" cy="6" r="5.2" fill="none" stroke="#d6d6d6" stroke-width="1.4"/><path d="M10 2.3L2.3 10A5.2 5.2 0 0 0 10 2.3Z" fill="#d6d6d6"/><path d="M10 12.5H14L12 14.5Z" fill="#d6d6d6"/></svg>
<svg style="left:728px;top:771px" width="14" height="11" viewBox="0 0 14 11"><path d="M0.5 0.5H5.5L6.5 2H13.5V10.5H0.5Z" fill="#d6d6d6"/></svg>
<svg style="left:756px;top:770px" width="13" height="13" viewBox="0 0 13 13"><rect x="0.7" y="0.7" width="11.6" height="11.6" fill="none" stroke="#d6d6d6" stroke-width="1.4"/><path d="M6.5 3.5V9.5M3.5 6.5H9.5" stroke="#d6d6d6" stroke-width="1.4"/></svg>
<svg style="left:782px;top:770px" width="12" height="13" viewBox="0 0 12 13"><path d="M0.5 2.5H11.5M4 2.5V1H8V2.5M2 2.5L2.7 12.5H9.3L10 2.5" fill="none" stroke="#9a9a9a" stroke-width="1.2"/><path d="M4.5 4.5V10.5M6 4.5V10.5M7.5 4.5V10.5" stroke="#9a9a9a" stroke-width="0.8"/></svg>

<!-- watermarks -->
<svg style="left:77px;top:488px;opacity:.74" width="180" height="140" viewBox="-30 -110 180 140">
<defs><mask id="m1"><circle r="21" fill="#fff"/><circle r="4" fill="#000"/><path d="M-4.2 2.2 Q-15 -13 -1.9 -21.5" transform="rotate(15)" stroke="#000" stroke-width="1.3" fill="none"/><path d="M-4.2 2.2 Q-15 -13 -1.9 -21.5" transform="rotate(87)" stroke="#000" stroke-width="1.3" fill="none"/><path d="M-4.2 2.2 Q-15 -13 -1.9 -21.5" transform="rotate(159)" stroke="#000" stroke-width="1.3" fill="none"/><path d="M-4.2 2.2 Q-15 -13 -1.9 -21.5" transform="rotate(231)" stroke="#000" stroke-width="1.3" fill="none"/><path d="M-4.2 2.2 Q-15 -13 -1.9 -21.5" transform="rotate(303)" stroke="#000" stroke-width="1.3" fill="none"/></mask></defs>
<circle r="21" fill="#c5c5c5" mask="url(#m1)"/>
<g transform="rotate(-29.7)"><text x="27.2" y="-3" font-size="18.5" font-weight="300" letter-spacing="2.2" fill="#c5c5c5" font-family="Liberation Sans, sans-serif">阳子湖软件园</text></g>
<g transform="rotate(-29.7)"><text x="27.6" y="15" font-size="13" font-weight="bold" fill="#c5c5c5" font-family="Liberation Sans, sans-serif">www.yangzihu.com</text></g>
</svg>
<svg style="left:329px;top:325px;opacity:.74" width="180" height="140" viewBox="-30 -110 180 140">
<defs><mask id="m2"><circle r="21" fill="#fff"/><circle r="4" fill="#000"/><path d="M-4.2 2.2 Q-15 -13 -1.9 -21.5" transform="rotate(15)" stroke="#000" stroke-width="1.3" fill="none"/><path d="M-4.2 2.2 Q-15 -13 -1.9 -21.5" transform="rotate(87)" stroke="#000" stroke-width="1.3" fill="none"/><path d="M-4.2 2.2 Q-15 -13 -1.9 -21.5" transform="rotate(159)" stroke="#000" stroke-width="1.3" fill="none"/><path d="M-4.2 2.2 Q-15 -13 -1.9 -21.5" transform="rotate(231)" stroke="#000" stroke-width="1.3" fill="none"/><path d="M-4.2 2.2 Q-15 -13 -1.9 -21.5" transform="rotate(303)" stroke="#000" stroke-width="1.3" fill="none"/></mask></defs>
<circle r="21" fill="#c5c5c5" mask="url(#m2)"/>
<g transform="rotate(-29.7)"><text x="27.2" y="-3" font-size="18.5" font-weight="300" letter-spacing="2.2" fill="#c5c5c5" font-family="Liberation Sans, sans-serif">阳子湖软件园</text></g>
<g transform="rotate(-29.7)"><text x="27.6" y="15" font-size="13" font-weight="bold" fill="#c5c5c5" font-family="Liberation Sans, sans-serif">www.yangzihu.com</text></g>
</svg>
<!-- wm3 -->
<svg style="left:557px;top:162px;opacity:.74" width="180" height="140" viewBox="-30 -110 180 140">
<defs><mask id="m3"><circle r="21" fill="#fff"/><circle r="4" fill="#000"/><path d="M-4.2 2.2 Q-15 -13 -1.9 -21.5" transform="rotate(15)" stroke="#000" stroke-width="1.3" fill="none"/><path d="M-4.2 2.2 Q-15 -13 -1.9 -21.5" transform="rotate(87)" stroke="#000" stroke-width="1.3" fill="none"/><path d="M-4.2 2.2 Q-15 -13 -1.9 -21.5" transform="rotate(159)" stroke="#000" stroke-width="1.3" fill="none"/><path d="M-4.2 2.2 Q-15 -13 -1.9 -21.5" transform="rotate(231)" stroke="#000" stroke-width="1.3" fill="none"/><path d="M-4.2 2.2 Q-15 -13 -1.9 -21.5" transform="rotate(303)" stroke="#000" stroke-width="1.3" fill="none"/></mask></defs>
<circle r="21" fill="#c5c5c5" mask="url(#m3)"/>
<g transform="rotate(-29.7)"><text x="27.2" y="-3" font-size="18.5" font-weight="300" letter-spacing="2.2" fill="#c5c5c5" font-family="Liberation Sans, sans-serif">阳子湖软件园</text></g>
<g transform="rotate(-29.7)"><text x="27.6" y="15" font-size="13" font-weight="bold" fill="#c5c5c5" font-family="Liberation Sans, sans-serif">www.yangzihu.com</text></g>
</svg>
<div class="a" style="left:822px;top:28px;width:4px;height:36px;background:#535353"></div><div class="a" style="left:822px;top:28px;width:1px;height:36px;background:#3a3a3a"></div>
</body></html>
